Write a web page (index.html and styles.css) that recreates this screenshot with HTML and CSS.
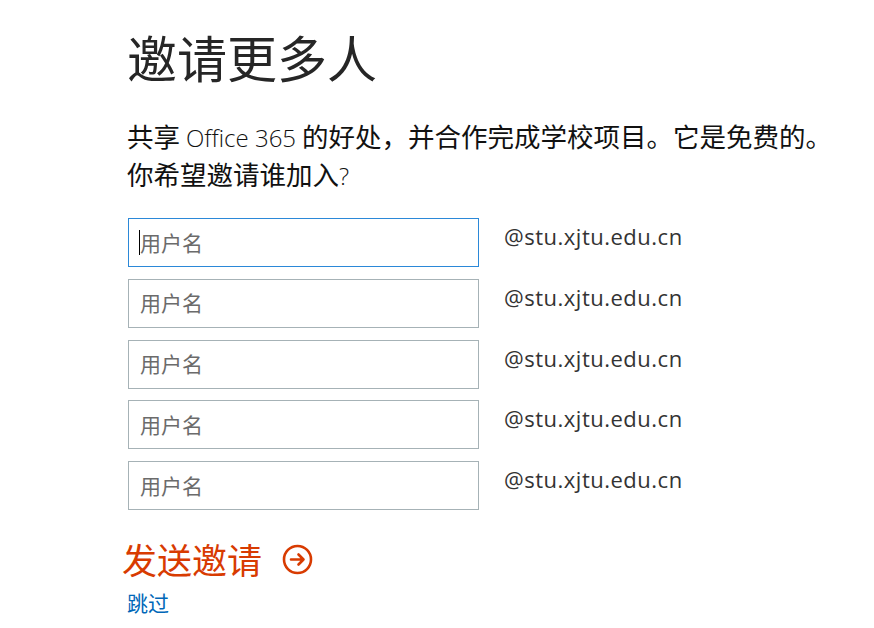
FILE: index.html
```html
<!DOCTYPE html>
<html lang="zh-CN">
<head>
<meta charset="utf-8">
<title>邀请更多人</title>
<link rel="stylesheet" href="styles.css">
</head>
<body>
<main class="page">
  <h1 class="title">邀请更多人</h1>
  <p class="intro">共享 <span class="latin">Office 365</span> 的好处，并合作完成学校项目。它是免费的。<br>你希望邀请谁加入<span class="latin">?</span></p>
  <div class="rows">
    <div class="row">
      <div class="field focused"><input class="input" type="text" placeholder="用户名"><span class="caret"></span></div>
      <span class="domain">@stu.xjtu.edu.cn</span>
    </div>
    <div class="row">
      <div class="field"><input class="input" type="text" placeholder="用户名"></div>
      <span class="domain">@stu.xjtu.edu.cn</span>
    </div>
    <div class="row">
      <div class="field"><input class="input" type="text" placeholder="用户名"></div>
      <span class="domain">@stu.xjtu.edu.cn</span>
    </div>
    <div class="row">
      <div class="field"><input class="input" type="text" placeholder="用户名"></div>
      <span class="domain">@stu.xjtu.edu.cn</span>
    </div>
    <div class="row">
      <div class="field"><input class="input" type="text" placeholder="用户名"></div>
      <span class="domain">@stu.xjtu.edu.cn</span>
    </div>
  </div>
  <a class="send" href="#">发送邀请
    <svg class="send-icon" width="31" height="31" viewBox="0 0 31 31" aria-hidden="true">
      <circle cx="15.5" cy="15.5" r="13.5" fill="none" stroke="#d83b01" stroke-width="2.6"/>
      <path d="M9 15.5 H21.5 M16.5 10.5 L21.5 15.5 L16.5 20.5" fill="none" stroke="#d83b01" stroke-width="2.6" stroke-linecap="round" stroke-linejoin="round"/>
    </svg>
  </a>
  <a class="skip" href="#">跳过</a>
</main>
</body>
</html>
```
FILE: styles.css
```css
html, body {
  margin: 0;
  padding: 0;
  background: #ffffff;
}
body {
  font-family: "Noto Sans CJK SC", "Noto Sans", sans-serif;
  color: #1f1f1f;
}
.page {
  display: flex;
  flex-direction: column;
  align-items: flex-start;
  padding: 26px 0 0 127px;
}
.title {
  margin: 0;
  font-size: 50px;
  font-weight: 400;
  line-height: 60px;
  color: #262626;
}
.intro {
  margin: 32px 0 0 0;
  font-size: 26.5px;
  line-height: 36px;
  color: #111111;
}
.latin {
  font-family: "Open Sans", "Noto Sans", sans-serif;
  font-weight: 300;
  font-size: 24px;
}
.rows {
  margin: 24px 0 0 1px;
  display: flex;
  flex-direction: column;
  gap: 11.75px;
}
.row {
  display: flex;
  align-items: flex-start;
  gap: 25px;
}
.field {
  position: relative;
  width: 351px;
  height: 49px;
  box-sizing: border-box;
  border: 1px solid #a6b2b6;
  background: #fff;
}
.field.focused {
  border-color: #2b88d8;
}
.input {
  display: block;
  width: 100%;
  height: 100%;
  box-sizing: border-box;
  border: 0;
  outline: none;
  margin: 0;
  padding: 0 10px 2px 11px;
  font-family: "Noto Sans CJK SC", "Noto Sans", sans-serif;
  font-size: 21px;
  color: #333;
  background: transparent;
}
.input::placeholder {
  color: #6b6b6b;
  opacity: 1;
}
.caret {
  position: absolute;
  left: 10px;
  top: 11px;
  width: 1px;
  height: 25px;
  background: #000;
}
.domain {
  margin-top: 3px;
  font-family: "Open Sans", "Noto Sans", sans-serif;
  font-weight: 400;
  font-size: 22px;
  letter-spacing: 0.5px;
  line-height: 30px;
  color: #333333;
}
.send {
  margin: 27px 0 0 -5px;
  display: flex;
  align-items: center;
  gap: 20px;
  font-size: 35px;
  line-height: 44px;
  color: #d83b01;
  text-decoration: none;
}
.send-icon {
  display: block;
  margin-top: 1px;
}
.skip {
  margin-top: 8px;
  font-size: 21px;
  line-height: 26px;
  color: #0067b8;
  text-decoration: none;
}
```
